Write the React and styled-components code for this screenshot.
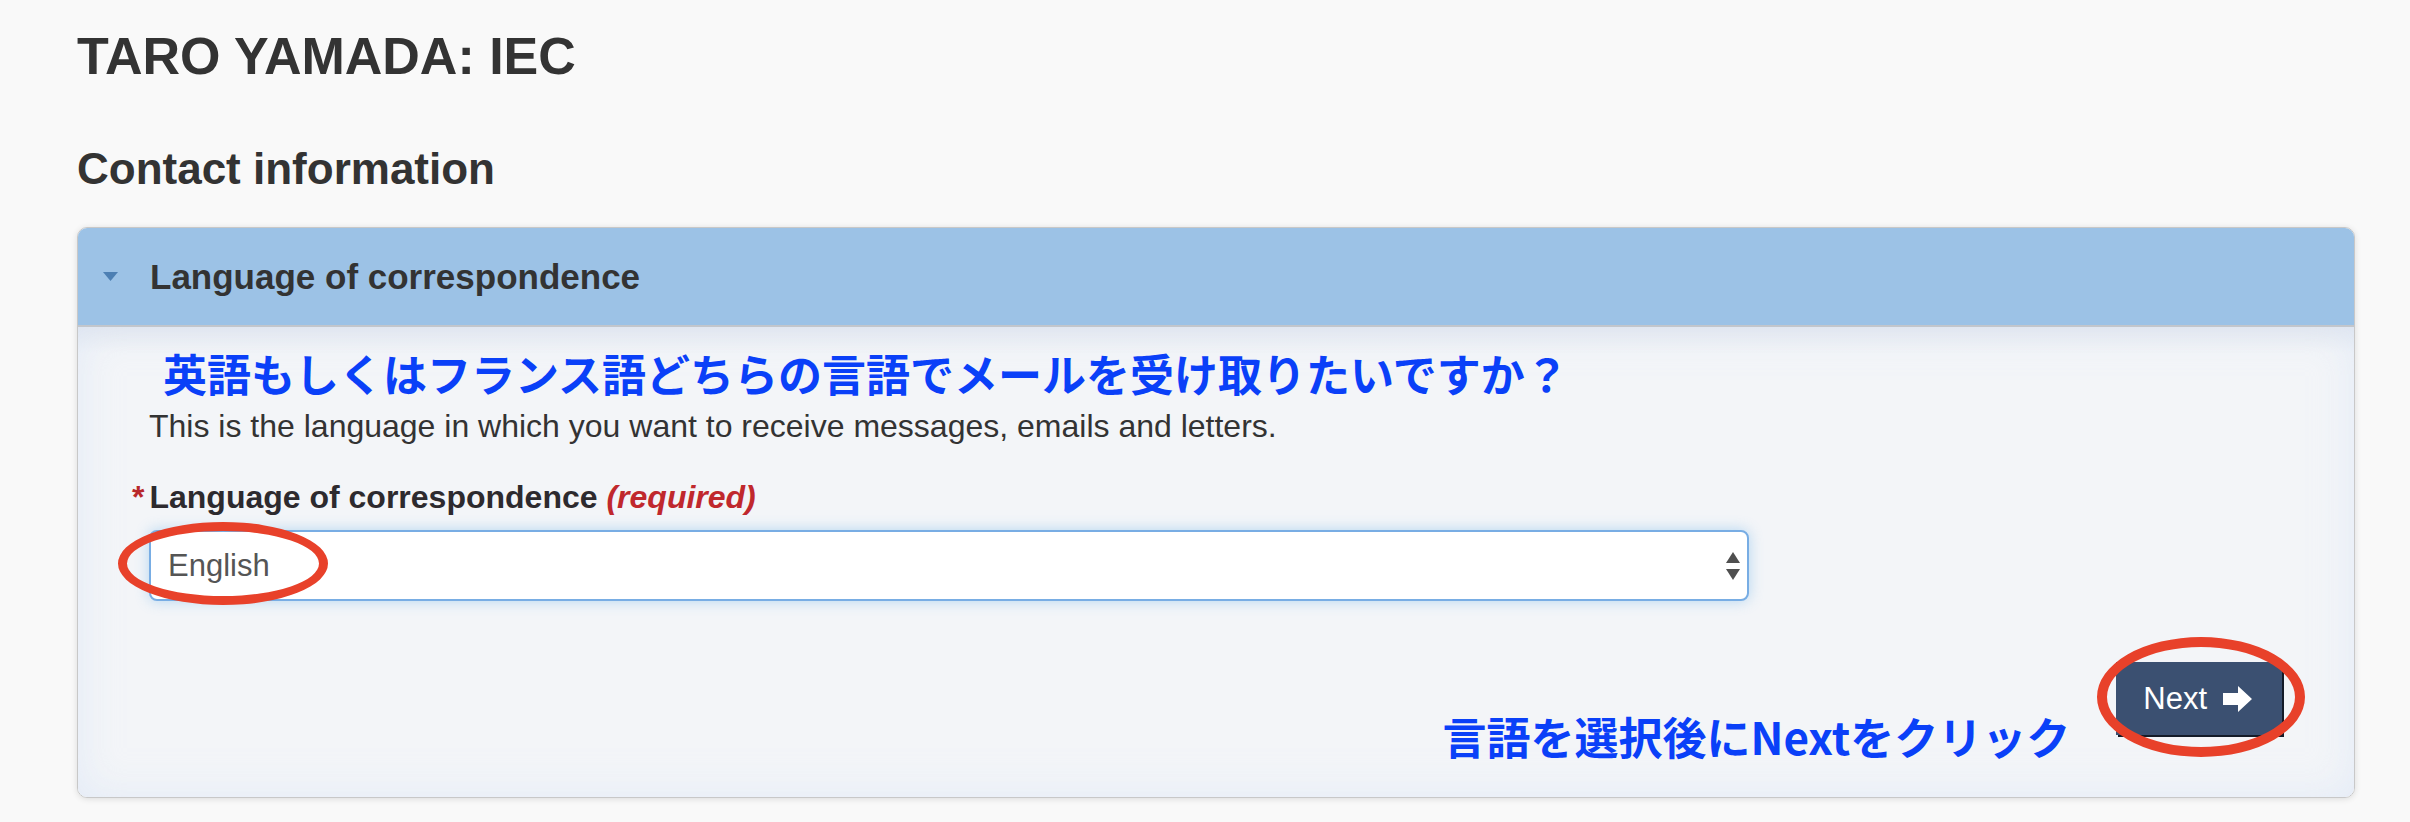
import styled, { createGlobalStyle } from 'styled-components';

const GlobalStyle = createGlobalStyle`
  body {
    margin: 0;
    background: #f9f9f9;
    font-family: "Liberation Sans", Arial, "Noto Sans CJK JP", sans-serif;
    color: #333;
  }
`;

const Page = styled.div`
  padding: 26px 55px 24px 77px;
`;

const Title = styled.h1`
  margin: 0;
  font-size: 52px;
  line-height: 60px;
  font-weight: 700;
  color: #333;
`;

const SectionTitle = styled.h2`
  margin: 57px 0 0;
  font-size: 44px;
  line-height: 52px;
  font-weight: 700;
  color: #333;
`;

const Panel = styled.section`
  margin-top: 32px;
  border: 1px solid #c8c8c8;
  border-radius: 10px;
  overflow: hidden;
  box-shadow: 0 1px 6px rgba(0, 0, 0, 0.12);
`;

const PanelHeader = styled.div`
  display: flex;
  align-items: center;
  gap: 32px;
  height: 97px;
  padding-left: 25px;
  background: #9cc2e6;
  border-bottom: 2px solid #c2c6cc;
`;

const HeaderTitle = styled.span`
  font-size: 35px;
  font-weight: 700;
  color: #333;
`;

const PanelBody = styled.div`
  padding: 20px 72px 35px 71px;
  background: linear-gradient(#e6e9ef, rgba(243, 245, 248, 0) 26px), #f3f5f8;
  box-shadow: inset 0 0 40px rgba(214, 226, 245, 0.55);
`;

const Note = styled.div`
  font-family: "Noto Sans CJK JP", sans-serif;
  font-size: 44px;
  line-height: 52px;
  font-weight: 700;
  color: #0a40f8;
  white-space: nowrap;
  margin-left: ${(p) => p.$indent || 0}px;
  margin-top: ${(p) => p.$top || 0}px;
`;

const Help = styled.p`
  margin: 7px 0 0;
  font-size: 32px;
  line-height: 40px;
  color: #333;
`;

const Label = styled.label`
  display: block;
  margin: 31px 0 0 -17px;
  font-size: 32px;
  line-height: 40px;
  font-weight: 700;
  color: #2d2a2e;
`;

const Star = styled.span`
  color: #b8282b;
  margin-right: 5px;
`;

const Required = styled.em`
  color: #c0282d;
  font-style: italic;
`;

const SelectWrap = styled.div`
  position: relative;
  width: 1600px;
  margin-top: 13px;
`;

const SelectBox = styled.div`
  box-sizing: border-box;
  display: flex;
  align-items: center;
  justify-content: space-between;
  height: 71px;
  padding: 0 7px 0 17px;
  background: #fff;
  border: 2px solid #78ade4;
  border-radius: 8px;
  box-shadow: 0 0 14px rgba(102, 175, 233, 0.45);
  font-size: 31px;
  color: #555;
`;

const Ring = styled.span`
  position: absolute;
  left: ${(p) => p.$left}px;
  top: ${(p) => p.$top}px;
  width: ${(p) => p.$w}px;
  height: ${(p) => p.$h}px;
  box-sizing: border-box;
  border: ${(p) => p.$stroke}px solid #e8412a;
  border-radius: 50%;
  pointer-events: none;
`;

const Footer = styled.div`
  display: flex;
  justify-content: flex-end;
  align-items: flex-start;
  gap: 46px;
  margin-top: 61px;
`;

const ButtonWrap = styled.div`
  position: relative;
`;

const NextButton = styled.button`
  display: flex;
  align-items: center;
  gap: 16px;
  height: 73px;
  padding: 0 30px 0 27px;
  border: none;
  background: #3b5071;
  color: #fff;
  font-family: "Liberation Sans", Arial, sans-serif;
  font-size: 31px;
  box-shadow: 2px 2px 0 #141b28;
`;

function Caret() {
  return (
    <svg width="15" height="9" viewBox="0 0 15 9">
      <polygon points="0,0 15,0 7.5,9" fill="#4d7fb3" />
    </svg>
  );
}

function UpDown() {
  return (
    <svg width="14" height="28" viewBox="0 0 14 28">
      <polygon points="7,0 14,11 0,11" fill="#4f4f4f" />
      <polygon points="0,17 14,17 7,28" fill="#4f4f4f" />
    </svg>
  );
}

function Arrow() {
  return (
    <svg width="29" height="26" viewBox="0 0 29 26">
      <polygon points="0,7 15,7 15,0 29,13 15,26 15,19 0,19" fill="#fff" />
    </svg>
  );
}

export default function App() {
  return (
    <Page>
      <GlobalStyle />
      <Title>TARO YAMADA: IEC</Title>
      <SectionTitle>Contact information</SectionTitle>
      <Panel>
        <PanelHeader>
          <Caret />
          <HeaderTitle>Language of correspondence</HeaderTitle>
        </PanelHeader>
        <PanelBody>
          <Note $indent={14}>英語もしくはフランス語どちらの言語でメールを受け取りたいですか？</Note>
          <Help>This is the language in which you want to receive messages, emails and letters.</Help>
          <Label>
            <Star>*</Star>Language of correspondence <Required>(required)</Required>
          </Label>
          <SelectWrap>
            <SelectBox>
              <span>English</span>
              <UpDown />
            </SelectBox>
            <Ring $left={-31} $top={-8} $w={210} $h={83} $stroke={9} />
          </SelectWrap>
          <Footer>
            <Note $top={48}>言語を選択後にNextをクリック</Note>
            <ButtonWrap>
              <NextButton>
                Next <Arrow />
              </NextButton>
              <Ring $left={-19} $top={-25} $w={208} $h={120} $stroke={10} />
            </ButtonWrap>
          </Footer>
        </PanelBody>
      </Panel>
    </Page>
  );
}
